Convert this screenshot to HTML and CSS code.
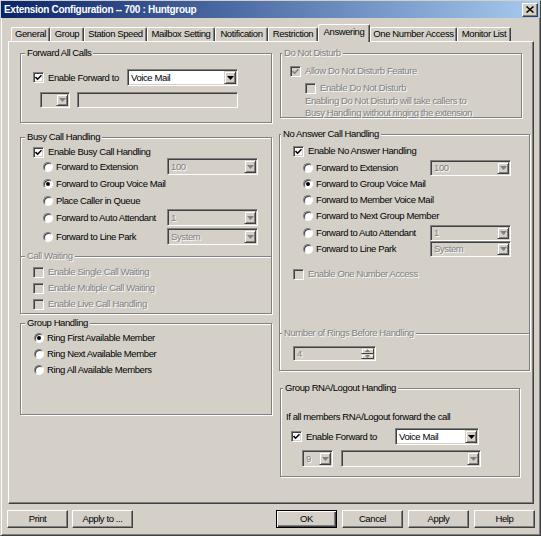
FILE: index.html
```html
<!DOCTYPE html>
<html>
<head>
<meta charset="utf-8">
<link rel="stylesheet" href="styles.css">
</head>
<body>
<div class="window">
  <div class="titlebar">
    <span class="title">Extension Configuration -- 700 : Huntgroup</span>
    <span class="close"><svg width="8" height="7" viewBox="0 0 8 7"><path d="M0.5 0.5L7.5 6.5M7.5 0.5L0.5 6.5" stroke="#000" stroke-width="1.5"/></svg></span>
  </div>
  <div class="tabs">
    <div class="tab t1">General</div>
    <div class="tab t2">Group</div>
    <div class="tab t3">Station Speed</div>
    <div class="tab t4">Mailbox Setting</div>
    <div class="tab t5">Notification</div>
    <div class="tab t6">Restriction</div>
    <div class="tab t7 sel">Answering</div>
    <div class="tab t8">One Number Access</div>
    <div class="tab t9">Monitor List</div>
  </div>
  <div class="panel">
    <div class="col col-l">
      <div class="group g-fwd">
        <div class="gh">Forward All Calls</div>
        <div class="row h17 fwd-r1">
          <div class="opt fwd-opt"><span class="cb"><svg class="chk" width="7" height="7" viewBox="0 0 7 7"><path d="M0.5 3L2.6 5.2L6.5 1.2" fill="none" stroke="#000" stroke-width="1.6"/></svg></span><span>Enable Forward to</span></div>
          <div class="combo w-fwdcombo"><span class="val">Voice Mail</span><span class="arr"><svg width="7" height="4" viewBox="0 0 7 4"><path d="M0 0H7L3.5 4Z" fill="#000"/></svg></span></div>
        </div>
        <div class="row h16 fwd-r2">
          <div class="combo off w-small fwd-small"><span class="val"></span><span class="arr"><svg width="7" height="4" viewBox="0 0 7 4"><path d="M0 0H7L3.5 4Z" fill="#808080"/></svg></span></div>
          <div class="tbox off fwd-text"></div>
        </div>
      </div>

      <div class="group g-busy nobottom">
        <div class="gh">Busy Call Handling</div>
        <div class="row h12 busy-en">
          <div class="opt ml12"><span class="cb"><svg class="chk" width="7" height="7" viewBox="0 0 7 7"><path d="M0.5 3L2.6 5.2L6.5 1.2" fill="none" stroke="#000" stroke-width="1.6"/></svg></span><span>Enable Busy Call Handling</span></div>
        </div>
        <div class="row h17">
          <div class="opt busy-opt"><span class="rb"></span><span>Forward to Extension</span></div>
          <div class="combo off w-busycombo"><span class="val dis">100</span><span class="arr"><svg width="7" height="4" viewBox="0 0 7 4"><path d="M0 0H7L3.5 4Z" fill="#808080"/></svg></span></div>
        </div>
        <div class="row h17">
          <div class="opt busy-opt"><span class="rb on"></span><span>Forward to Group Voice Mail</span></div>
        </div>
        <div class="row h17">
          <div class="opt busy-opt"><span class="rb"></span><span>Place Caller in Queue</span></div>
        </div>
        <div class="row h17">
          <div class="opt busy-opt"><span class="rb"></span><span>Forward to Auto Attendant</span></div>
          <div class="combo off w-busycombo"><span class="val dis">1</span><span class="arr"><svg width="7" height="4" viewBox="0 0 7 4"><path d="M0 0H7L3.5 4Z" fill="#808080"/></svg></span></div>
        </div>
        <div class="row h17 mt2">
          <div class="opt busy-opt"><span class="rb"></span><span>Forward to Line Park</span></div>
          <div class="combo off w-busycombo"><span class="val dis">System</span><span class="arr"><svg width="7" height="4" viewBox="0 0 7 4"><path d="M0 0H7L3.5 4Z" fill="#808080"/></svg></span></div>
        </div>
      </div>

      <div class="group g-cw">
        <div class="gh dis">Call Waiting</div>
        <div class="row h16 mt2">
          <div class="opt ml12 dis"><span class="cb off"></span><span>Enable Single Call Waiting</span></div>
        </div>
        <div class="row h16">
          <div class="opt ml12 dis"><span class="cb off"></span><span>Enable Multiple Call Waiting</span></div>
        </div>
        <div class="row h16">
          <div class="opt ml12 dis"><span class="cb off"></span><span>Enable Live Call Handling</span></div>
        </div>
      </div>

      <div class="group g-gh">
        <div class="gh">Group Handling</div>
        <div class="row h16 mt1">
          <div class="opt ml13"><span class="rb on"></span><span>Ring First Available Member</span></div>
        </div>
        <div class="row h16">
          <div class="opt ml13"><span class="rb"></span><span>Ring Next Available Member</span></div>
        </div>
        <div class="row h16">
          <div class="opt ml13"><span class="rb"></span><span>Ring All Available Members</span></div>
        </div>
      </div>
    </div>

    <div class="col col-r">
      <div class="group g-dnd">
        <div class="gh ghr dis">Do Not Disturb</div>
        <div class="row h16 mt4">
          <div class="opt ml9 dis"><span class="cb off"><svg class="chk" width="7" height="7" viewBox="0 0 7 7"><path d="M0.5 3L2.6 5.2L6.5 1.2" fill="none" stroke="#808080" stroke-width="1.6"/></svg></span><span>Allow Do Not Disturb Feature</span></div>
        </div>
        <div class="row h16 mt1">
          <div class="opt ml24 dis"><span class="cb off"></span><span>Enable Do Not Disturb</span></div>
        </div>
        <div class="note dis">Enabling Do Not Disturb will take callers to<br>Busy Handling without ringing the extension</div>
      </div>

      <div class="group g-na nobottom">
        <div class="gh ghr">No Answer Call Handling</div>
        <div class="row h16 mt3">
          <div class="opt ml13"><span class="cb"><svg class="chk" width="7" height="7" viewBox="0 0 7 7"><path d="M0.5 3L2.6 5.2L6.5 1.2" fill="none" stroke="#000" stroke-width="1.6"/></svg></span><span>Enable No Answer Handling</span></div>
        </div>
        <div class="row h16 mt1">
          <div class="opt na-opt"><span class="rb"></span><span>Forward to Extension</span></div>
          <div class="combo off c16 w-nacombo"><span class="val dis">100</span><span class="arr"><svg width="7" height="4" viewBox="0 0 7 4"><path d="M0 0H7L3.5 4Z" fill="#808080"/></svg></span></div>
        </div>
        <div class="row h16">
          <div class="opt na-opt"><span class="rb on"></span><span>Forward to Group Voice Mail</span></div>
        </div>
        <div class="row h16">
          <div class="opt na-opt"><span class="rb"></span><span>Forward to Member Voice Mail</span></div>
        </div>
        <div class="row h16">
          <div class="opt na-opt"><span class="rb"></span><span>Forward to Next Group Member</span></div>
        </div>
        <div class="row h16 mt1">
          <div class="opt na-opt"><span class="rb"></span><span>Forward to Auto Attendant</span></div>
          <div class="combo off c16 w-nacombo"><span class="val dis">1</span><span class="arr"><svg width="7" height="4" viewBox="0 0 7 4"><path d="M0 0H7L3.5 4Z" fill="#808080"/></svg></span></div>
        </div>
        <div class="row h16">
          <div class="opt na-opt"><span class="rb"></span><span>Forward to Line Park</span></div>
          <div class="combo off c16 w-nacombo"><span class="val dis">System</span><span class="arr"><svg width="7" height="4" viewBox="0 0 7 4"><path d="M0 0H7L3.5 4Z" fill="#808080"/></svg></span></div>
        </div>
        <div class="row h16 mt9">
          <div class="opt ml13 dis"><span class="cb off"></span><span>Enable One Number Access</span></div>
        </div>
      </div>

      <div class="group g-rings">
        <div class="gh ghr2 dis">Number of Rings Before Handling</div>
        <div class="spin">
          <span class="val dis">4</span>
          <span class="spbtns">
            <span class="spb"><svg width="5" height="3" viewBox="0 0 5 3"><path d="M0 3H5L2.5 0Z" fill="#808080"/></svg></span>
            <span class="spb"><svg width="5" height="3" viewBox="0 0 5 3"><path d="M0 0H5L2.5 3Z" fill="#808080"/></svg></span>
          </span>
        </div>
      </div>

      <div class="group g-rna">
        <div class="gh ghr2">Group RNA/Logout Handling</div>
        <div class="rna-text">If all members RNA/Logout forward the call</div>
        <div class="row h17 mt5">
          <div class="opt rna-opt"><span class="cb"><svg class="chk" width="7" height="7" viewBox="0 0 7 7"><path d="M0.5 3L2.6 5.2L6.5 1.2" fill="none" stroke="#000" stroke-width="1.6"/></svg></span><span>Enable Forward to</span></div>
          <div class="combo w-rnacombo"><span class="val">Voice Mail</span><span class="arr"><svg width="7" height="4" viewBox="0 0 7 4"><path d="M0 0H7L3.5 4Z" fill="#000"/></svg></span></div>
        </div>
        <div class="row h17 mt5">
          <div class="combo off w-rnasmall"><span class="val dis">9</span><span class="arr"><svg width="7" height="4" viewBox="0 0 7 4"><path d="M0 0H7L3.5 4Z" fill="#808080"/></svg></span></div>
          <div class="combo off w-rnawide"><span class="val"></span><span class="arr"><svg width="7" height="4" viewBox="0 0 7 4"><path d="M0 0H7L3.5 4Z" fill="#808080"/></svg></span></div>
        </div>
      </div>
    </div>
  </div>
  <div class="buttons">
    <div class="btngrp gl">
      <div class="btn">Print</div>
      <div class="btn">Apply to ...</div>
    </div>
    <div class="btngrp">
      <div class="btn def">OK</div>
      <div class="btn">Cancel</div>
      <div class="btn">Apply</div>
      <div class="btn">Help</div>
    </div>
  </div>
</div>
</body>
</html>
```
FILE: styles.css
```css
* { box-sizing: border-box; }
body {
  margin: 0;
  font-family: "Liberation Sans", Arial, sans-serif;
  font-size: 9.5px;
  letter-spacing: -0.4px;
  line-height: 12px;
  color: #000;
  background: #d4d0c8;
}
.window {
  width: 541px;
  height: 536px;
  background: #d4d0c8;
  border: 1px solid;
  border-color: #d4d0c8 #404040 #404040 #d4d0c8;
  box-shadow: inset 1px 1px #fff, inset -1px -1px #808080;
}
.titlebar {
  height: 17px;
  background: linear-gradient(to right, #0a246a, #a6caf0);
  display: flex;
  align-items: center;
  justify-content: space-between;
  padding: 0 2px 0 3px;
}
.title {
  color: #fff;
  font-weight: bold;
  font-size: 10px;
  letter-spacing: -0.3px;
}
.close {
  width: 16px;
  height: 14px;
  background: #d4d0c8;
  border: 1px solid;
  border-color: #fff #404040 #404040 #fff;
  box-shadow: inset -1px -1px #808080;
  display: flex;
  align-items: center;
  justify-content: center;
}
.tabs {
  display: flex;
  align-items: flex-end;
  height: 17px;
  margin-top: 6px;
  padding-left: 10px;
}
.tab {
  height: 14px;
  border: 1px solid;
  border-bottom: 0;
  border-color: #fff #404040 transparent #fff;
  box-shadow: inset -1px 0 #808080;
  border-radius: 2px 2px 0 0;
  text-align: center;
  line-height: 12px;
  white-space: nowrap;
}
.tab.sel {
  height: 18px;
  margin-bottom: -1px;
  position: relative;
  z-index: 1;
  background: #d4d0c8;
  line-height: 13px;
}
.t1 { width: 39px; }
.t2 { width: 34px; }
.t3 { width: 63px; }
.t4 { width: 68px; }
.t5 { width: 53px; }
.t6 { width: 50px; }
.t7 { width: 52px; }
.t8 { width: 87px; }
.t9 { width: 54px; }

.panel {
  margin-left: 7px;
  width: 526px;
  height: 463px;
  border: 1px solid;
  border-color: #fff #404040 #404040 #fff;
  box-shadow: inset -1px -1px #808080;
  display: flex;
  gap: 7px;
  padding-left: 11px;
}
.col-l { width: 252px; }
.col-r { width: 251px; }

.group {
  border: 1px solid #808080;
  box-shadow: inset 1px 1px #fff, 1px 1px #fff;
}
.group.nobottom { border-bottom: 0; }
.gh {
  width: max-content;
  height: 12px;
  line-height: 12px;
  margin: -7px 0 0 4px;
  padding: 0 2px;
  background: #d4d0c8;
}
.gh.ghr { margin-left: 1px; }
.gh.ghr2 { margin-left: 2px; }

.g-fwd { margin-top: 11px; height: 70px; }
.g-busy { margin-top: 14px; height: 119px; }
.g-cw { height: 58px; }
.g-gh { margin-top: 9px; height: 92px; }

.g-dnd { margin: 11px 0 0 1px; width: 242px; height: 65px; }
.g-na { margin-top: 16px; width: 251px; height: 199px; }
.g-rings { width: 251px; height: 38px; }
.g-rna { margin: 17px 0 0 1px; width: 240px; height: 89px; }

.row { display: flex; align-items: center; }
.h12 { height: 12px; }
.h16 { height: 16px; }
.h17 { height: 17px; }
.mt1 { margin-top: 1px; }
.mt2 { margin-top: 2px; }
.mt3 { margin-top: 3px; }
.mt4 { margin-top: 4px; }
.mt5 { margin-top: 5px; }
.mt9 { margin-top: 9px; }

.opt { display: flex; align-items: center; white-space: nowrap; }
.ml9 { margin-left: 9px; }
.ml12 { margin-left: 12px; }
.ml13 { margin-left: 13px; }
.ml24 { margin-left: 24px; }

.fwd-r1 { margin-top: 10px; }
.fwd-r2 { margin-top: 6px; }
.fwd-opt { margin-left: 12px; width: 94px; }
.busy-en { margin-top: 3px; }
.busy-opt { margin-left: 22px; width: 124px; }
.na-opt { margin-left: 23px; width: 127px; }
.rna-opt { margin-left: 10px; width: 104px; }

.dis { color: #808080; text-shadow: 1px 1px 0 #fff; }

.cb {
  width: 11px;
  height: 11px;
  flex: none;
  background: #fff;
  border: 1px solid;
  border-color: #808080 #fff #fff #808080;
  box-shadow: inset 1px 1px #404040, inset -1px -1px #d4d0c8;
  display: flex;
  align-items: center;
  justify-content: center;
  margin-right: 4px;
}
.cb.off { background: #d4d0c8; }
.chk { display: block; }

.rb {
  width: 10px;
  height: 10px;
  flex: none;
  border-radius: 50%;
  background: #fff;
  border: 1px solid;
  border-color: #808080 #fff #fff #808080;
  box-shadow: inset 1px 1px #404040;
  display: flex;
  align-items: center;
  justify-content: center;
  margin-right: 3px;
}
.rb.on::after {
  content: "";
  width: 4px;
  height: 4px;
  border-radius: 50%;
  background: #000;
}

.combo {
  display: flex;
  height: 17px;
  padding: 1px;
  background: #fff;
  border: 1px solid;
  border-color: #808080 #fff #fff #808080;
  box-shadow: inset 1px 1px #404040, inset -1px -1px #d4d0c8;
  flex: none;
}
.combo.c16 { height: 16px; }
.combo.off { background: #d4d0c8; }
.combo .val {
  flex: 1;
  padding-left: 2px;
  line-height: 13px;
  overflow: hidden;
  white-space: nowrap;
}
.combo.c16 .val { line-height: 12px; }
.arr {
  width: 12px;
  flex: none;
  background: #d4d0c8;
  border: 1px solid;
  border-color: #d4d0c8 #404040 #404040 #d4d0c8;
  box-shadow: inset 1px 1px #fff, inset -1px -1px #808080;
  display: flex;
  align-items: center;
  justify-content: center;
}
.w-fwdcombo { width: 111px; }
.w-small { width: 30px; }
.fwd-small { margin-left: 19px; height: 16px; }
.w-busycombo { width: 91px; }
.w-nacombo { width: 81px; }
.w-rnacombo { width: 84px; }
.w-rnasmall { width: 31px; margin-left: 21px; }
.w-rnawide { width: 140px; margin-left: 8px; }

.tbox {
  width: 161px;
  height: 16px;
  margin-left: 7px;
  background: #d4d0c8;
  border: 1px solid;
  border-color: #808080 #fff #fff #808080;
  box-shadow: inset 1px 1px #404040, inset -1px -1px #d4d0c8;
}

.note {
  margin: -1px 0 0 24px;
  line-height: 12px;
  white-space: nowrap;
}

.spin {
  display: flex;
  width: 83px;
  height: 15px;
  margin: 7px 0 0 13px;
  padding: 1px;
  background: #d4d0c8;
  border: 1px solid;
  border-color: #808080 #fff #fff #808080;
  box-shadow: inset 1px 1px #404040, inset -1px -1px #d4d0c8;
}
.spin .val { flex: 1; padding-left: 2px; line-height: 11px; }
.spbtns { width: 13px; display: flex; flex-direction: column; }
.spb {
  flex: 1;
  background: #d4d0c8;
  border: 1px solid;
  border-color: #d4d0c8 #404040 #404040 #d4d0c8;
  box-shadow: inset 1px 1px #fff;
  display: flex;
  align-items: center;
  justify-content: center;
}

.rna-text {
  margin: 17px 0 0 5px;
  line-height: 12px;
  white-space: nowrap;
}

.buttons {
  display: flex;
  justify-content: space-between;
  margin-top: 6px;
  padding: 0 5px 0 6px;
}
.btngrp { display: flex; gap: 5px; }
.btngrp.gl { gap: 4px; }
.btn {
  width: 61px;
  height: 18px;
  border: 1px solid;
  border-color: #fff #404040 #404040 #fff;
  box-shadow: inset -1px -1px #808080;
  display: flex;
  align-items: center;
  justify-content: center;
  white-space: nowrap;
}
.btn.def {
  border-color: #000;
  box-shadow: inset 1px 1px #fff, inset -1px -1px #404040, inset -2px -2px #808080;
}
```
